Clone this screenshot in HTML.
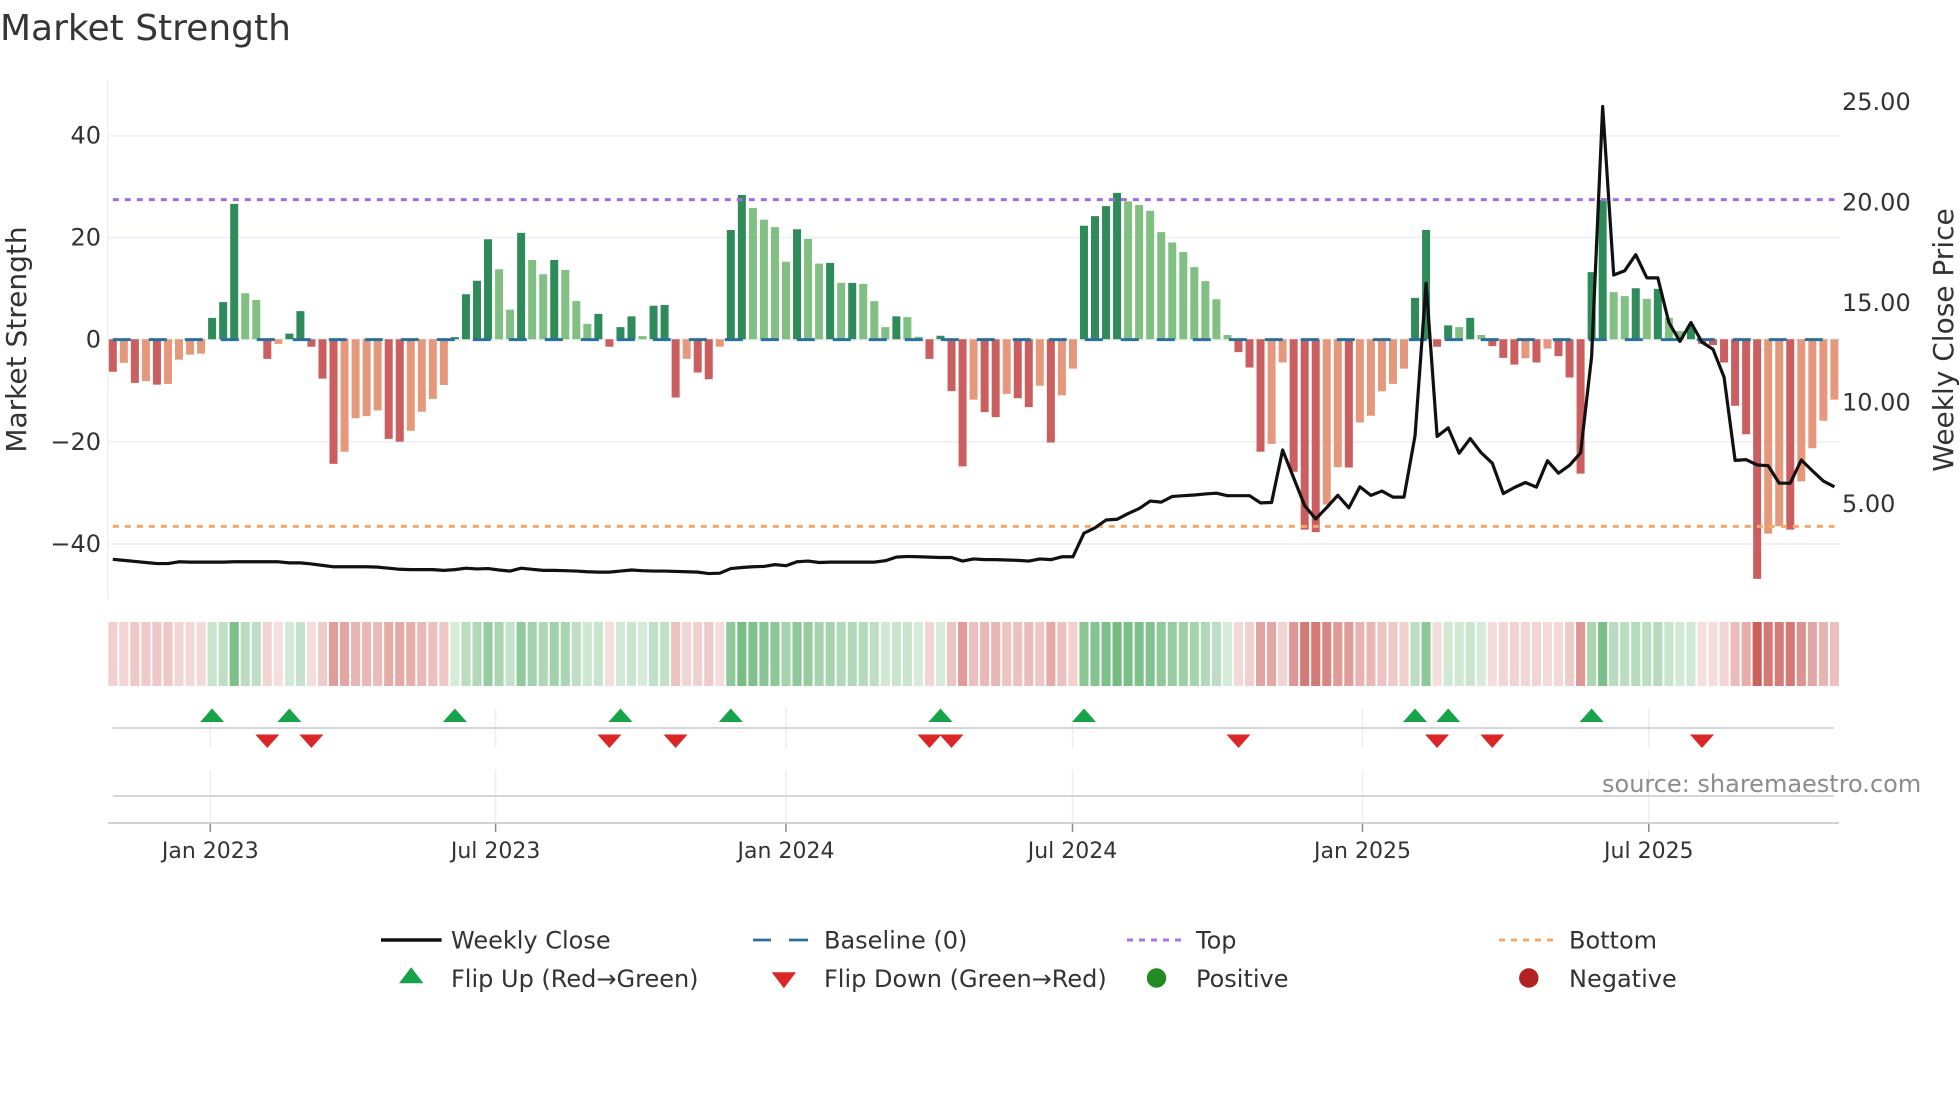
<!DOCTYPE html>
<html lang="en">
<head>
<meta charset="utf-8">
<title>Market Strength</title>
<style>
html,body{margin:0;padding:0;background:#fff;width:1960px;height:1102px;overflow:hidden}
svg{display:block}
text{font-family:"DejaVu Sans","Liberation Sans",sans-serif;fill:#333}
.h rect{width:.825px;height:1px}
.r{fill:rgb(200,85,80)}
.g{fill:rgb(40,150,60)}
</style>
</head>
<body>
<svg width="1960" height="1102" viewBox="0 0 1960 1102" xmlns="http://www.w3.org/2000/svg">
<rect width="1960" height="1102" fill="#fff"/>
<text x="0" y="40" font-size="36" style="fill:#363636">Market Strength</text>

<!-- grid -->
<path d="M107.7 80V599" stroke="#eef1f5" stroke-width="1.5" fill="none"/>
<path d="M108 135.7H1840M108 237.5H1840M108 441.8H1840M108 544H1840" stroke="#eff2f7" stroke-width="2" fill="none"/>
<path d="M108 339.6H1840" stroke="#eef3f0" stroke-width="2.5" fill="none"/>

<!-- bars: x = index, y = source coords -->
<g transform="translate(112.8 60) scale(11.036 .35714)" fill="none" stroke-width=".725">
<path stroke="#2f8b5a" d="M9 782V722M10 782V678M11 782V403M16 782V766M17 782V703M31 782V776M32 782V656M33 782V618M34 782V502M37 782V484M40 782V560M44 782V711M46 782V748M47 782V718M49 782V688M50 782V686M56 782V476M57 782V378M62 782V474M65 782V568M67 782V624M71 782V718M75 782V772M88 782V464M89 782V437M90 782V409M91 782V372M118 782V666M119 782V476M121 782V743M123 782V722M134 782V594M135 782V392M138 782V639M140 782V641M143 782V745"/>
<path stroke="#81bf82" d="M12 782V653M13 782V672M35 782V586M36 782V699M38 782V560M39 782V600M41 782V588M42 782V675M43 782V739M48 782V773M58 782V414M59 782V447M60 782V468M61 782V565M63 782V501M64 782V570M66 782V624M68 782V627M69 782V675M70 782V748M72 782V720M73 782V775M92 782V396M93 782V406M94 782V422M95 782V482M96 782V511M97 782V538M98 782V580M99 782V619M100 782V670M101 782V770M122 782V748M124 782V770M136 782V650M137 782V661M139 782V669M141 782V722M142 782V759"/>
<path stroke="#cb5e5e" d="M0 782V873M2 782V904M4 782V909M14 782V837M18 782V803M19 782V892M20 782V1131M25 782V1061M26 782V1069M45 782V803M51 782V945M53 782V875M54 782V894M74 782V837M76 782V927M77 782V1138M79 782V986M80 782V1000M82 782V947M83 782V972M85 782V1071M102 782V818M103 782V861M104 782V1097M107 782V1153M108 782V1315M109 782V1322M112 782V1141M120 782V803M125 782V801M126 782V834M127 782V853M129 782V847M131 782V829M132 782V889M133 782V1158M144 782V795M145 782V798M146 782V847M147 782V968M148 782V1048M149 782V1453M152 782V1315"/>
<path stroke="#e6987c" d="M1 782V848M3 782V899M5 782V907M6 782V839M7 782V825M8 782V822M15 782V795M21 782V1097M22 782V1003M23 782V997M24 782V981M27 782V1038M28 782V985M29 782V949M30 782V910M52 782V837M55 782V803M78 782V951M81 782V935M84 782V912M86 782V939M87 782V864M105 782V1075M106 782V847M110 782V1245M111 782V1140M113 782V1015M114 782V996M115 782V928M116 782V907M117 782V864M128 782V835M130 782V808M150 782V1326M151 782V1305M153 782V1180M154 782V1087M155 782V1010M156 782V951"/>
</g>

<!-- reference lines -->
<path d="M112.8 339.6H1834.5" stroke="#2a709f" stroke-width="3" stroke-dasharray="18 18" fill="none"/>
<path d="M112.8 199.6H1834.5" stroke="#9b6fdc" stroke-width="3" stroke-dasharray="6 6" fill="none"/>
<path d="M112.8 526.4H1834.5" stroke="#f3a96b" stroke-width="3" stroke-dasharray="6 6" fill="none"/>

<!-- price line -->
<g transform="translate(112.8 60) scale(11.036 .35714)">
<polyline fill="none" stroke="#111" stroke-width="3.2" stroke-linejoin="round" stroke-linecap="butt" vector-effect="non-scaling-stroke" points="0,1398 1,1401 2,1404 3,1407 4,1410 5,1410 6,1405 7,1406 8,1406 9,1406 10,1406 11,1405 12,1405 13,1405 14,1405 15,1405 16,1408 17,1408 18,1411 19,1415 20,1419 21,1419 22,1419 23,1419 24,1420 25,1423 26,1426 27,1427 28,1427 29,1427 30,1429 31,1427 32,1423 33,1425 34,1424 35,1428 36,1431 37,1423 38,1426 39,1429 40,1429 41,1430 42,1431 43,1433 44,1434 45,1434 46,1431 47,1428 48,1430 49,1431 50,1431 51,1432 52,1433 53,1434 54,1438 55,1437 56,1424 57,1421 58,1419 59,1418 60,1413 61,1416 62,1405 63,1403 64,1407 65,1406 66,1406 67,1406 68,1406 69,1406 70,1402 71,1392 72,1390 73,1391 74,1392 75,1393 76,1393 77,1403 78,1397 79,1399 80,1399 81,1400 82,1401 83,1403 84,1397 85,1399 86,1391 87,1391 88,1325 89,1310 90,1288 91,1286 92,1270 93,1256 94,1235 95,1238 96,1222 97,1220 98,1218 99,1215 100,1213 101,1220 102,1220 103,1220 104,1240 105,1239 106,1092 107,1170 108,1248 109,1285 110,1253 111,1219 112,1254 113,1195 114,1219 115,1207 116,1224 117,1224 118,1052 119,625 120,1054 121,1030 122,1101 123,1060 124,1100 125,1129 126,1214 127,1197 128,1183 129,1196 130,1122 131,1157 132,1135 133,1100 134,830 135,130 136,602 137,590 138,545 139,610 140,610 141,735 142,788 143,735 144,790 145,810 146,888 147,1121 148,1119 149,1134 150,1136 151,1185 152,1185 153,1120 154,1150 155,1179 156,1195"/>
</g>

<!-- axis tick labels -->
<g font-size="24" text-anchor="end">
<text x="101" y="143.7">40</text>
<text x="101" y="245.5">20</text>
<text x="101" y="347.5">0</text>
<text x="101" y="449.8">−20</text>
<text x="101" y="552">−40</text>
</g>
<g font-size="24">
<text x="1842" y="109.8">25.00</text>
<text x="1842" y="210.5">20.00</text>
<text x="1842" y="310.8">15.00</text>
<text x="1842" y="410.3">10.00</text>
<text x="1842" y="512">5.00</text>
</g>
<text transform="translate(26 339.5) rotate(-90)" font-size="28" text-anchor="middle">Market Strength</text>
<text transform="translate(1953 340) rotate(-90)" font-size="28" text-anchor="middle">Weekly Close Price</text>

<!-- heat strip -->
<g class="h" transform="translate(108.25 622) scale(11.036 64)">
<g class="r"><rect x="0" opacity=".28"/><rect x="1" opacity=".25"/><rect x="2" opacity=".32"/><rect x="3" opacity=".31"/><rect x="4" opacity=".32"/><rect x="5" opacity=".32"/><rect x="6" opacity=".24"/><rect x="7" opacity=".23"/><rect x="8" opacity=".22"/></g>
<g class="g"><rect x="9" opacity=".25"/><rect x="10" opacity=".3"/><rect x="11" opacity=".6"/><rect x="12" opacity=".32"/><rect x="13" opacity=".3"/></g>
<g class="r"><rect x="14" opacity=".24"/><rect x="15" opacity=".19"/></g>
<g class="g"><rect x="16" opacity=".2"/><rect x="17" opacity=".27"/></g>
<g class="r"><rect x="18" opacity=".2"/><rect x="19" opacity=".3"/><rect x="20" opacity=".57"/><rect x="21" opacity=".53"/><rect x="22" opacity=".43"/><rect x="23" opacity=".42"/><rect x="24" opacity=".4"/><rect x="25" opacity=".49"/><rect x="26" opacity=".5"/><rect x="27" opacity=".47"/><rect x="28" opacity=".41"/><rect x="29" opacity=".37"/><rect x="30" opacity=".32"/></g>
<g class="g"><rect x="31" opacity=".19"/><rect x="32" opacity=".32"/><rect x="33" opacity=".36"/><rect x="34" opacity=".49"/><rect x="35" opacity=".4"/><rect x="36" opacity=".27"/><rect x="37" opacity=".51"/><rect x="38" opacity=".43"/><rect x="39" opacity=".38"/><rect x="40" opacity=".43"/><rect x="41" opacity=".4"/><rect x="42" opacity=".3"/><rect x="43" opacity=".23"/><rect x="44" opacity=".26"/></g>
<g class="r"><rect x="45" opacity=".2"/></g>
<g class="g"><rect x="46" opacity=".22"/><rect x="47" opacity=".25"/><rect x="48" opacity=".19"/><rect x="49" opacity=".29"/><rect x="50" opacity=".29"/></g>
<g class="r"><rect x="51" opacity=".36"/><rect x="52" opacity=".24"/><rect x="53" opacity=".28"/><rect x="54" opacity=".31"/><rect x="55" opacity=".2"/></g>
<g class="g"><rect x="56" opacity=".52"/><rect x="57" opacity=".63"/><rect x="58" opacity=".59"/><rect x="59" opacity=".55"/><rect x="60" opacity=".53"/><rect x="61" opacity=".42"/><rect x="62" opacity=".52"/><rect x="63" opacity=".49"/><rect x="64" opacity=".42"/><rect x="65" opacity=".42"/><rect x="66" opacity=".36"/><rect x="67" opacity=".36"/><rect x="68" opacity=".35"/><rect x="69" opacity=".3"/><rect x="70" opacity=".22"/><rect x="71" opacity=".25"/><rect x="72" opacity=".25"/><rect x="73" opacity=".19"/></g>
<g class="r"><rect x="74" opacity=".24"/></g>
<g class="g"><rect x="75" opacity=".19"/></g>
<g class="r"><rect x="76" opacity=".34"/><rect x="77" opacity=".58"/><rect x="78" opacity=".37"/><rect x="79" opacity=".41"/><rect x="80" opacity=".42"/><rect x="81" opacity=".35"/><rect x="82" opacity=".36"/><rect x="83" opacity=".39"/><rect x="84" opacity=".33"/><rect x="85" opacity=".5"/><rect x="86" opacity=".36"/><rect x="87" opacity=".27"/></g>
<g class="g"><rect x="88" opacity=".54"/><rect x="89" opacity=".57"/><rect x="90" opacity=".6"/><rect x="91" opacity=".64"/><rect x="92" opacity=".61"/><rect x="93" opacity=".6"/><rect x="94" opacity=".58"/><rect x="95" opacity=".52"/><rect x="96" opacity=".48"/><rect x="97" opacity=".45"/><rect x="98" opacity=".41"/><rect x="99" opacity=".36"/><rect x="100" opacity=".31"/><rect x="101" opacity=".19"/></g>
<g class="r"><rect x="102" opacity=".22"/><rect x="103" opacity=".27"/><rect x="104" opacity=".53"/><rect x="105" opacity=".51"/><rect x="106" opacity=".25"/><rect x="107" opacity=".6"/><rect x="108" opacity=".78"/><rect x="109" opacity=".78"/><rect x="110" opacity=".7"/><rect x="111" opacity=".58"/><rect x="112" opacity=".58"/><rect x="113" opacity=".44"/><rect x="114" opacity=".42"/><rect x="115" opacity=".34"/><rect x="116" opacity=".32"/><rect x="117" opacity=".27"/></g>
<g class="g"><rect x="118" opacity=".31"/><rect x="119" opacity=".52"/></g>
<g class="r"><rect x="120" opacity=".2"/></g>
<g class="g"><rect x="121" opacity=".22"/><rect x="122" opacity=".22"/><rect x="123" opacity=".25"/><rect x="124" opacity=".19"/></g>
<g class="r"><rect x="125" opacity=".2"/><rect x="126" opacity=".24"/><rect x="127" opacity=".26"/><rect x="128" opacity=".24"/><rect x="129" opacity=".25"/><rect x="130" opacity=".21"/><rect x="131" opacity=".23"/><rect x="132" opacity=".3"/><rect x="133" opacity=".6"/></g>
<g class="g"><rect x="134" opacity=".39"/><rect x="135" opacity=".61"/><rect x="136" opacity=".33"/><rect x="137" opacity=".32"/><rect x="138" opacity=".34"/><rect x="139" opacity=".31"/><rect x="140" opacity=".34"/><rect x="141" opacity=".25"/><rect x="142" opacity=".21"/><rect x="143" opacity=".22"/></g>
<g class="r"><rect x="144" opacity=".19"/><rect x="145" opacity=".2"/><rect x="146" opacity=".25"/><rect x="147" opacity=".39"/><rect x="148" opacity=".48"/><rect x="149" opacity=".93"/><rect x="150" opacity=".79"/><rect x="151" opacity=".77"/><rect x="152" opacity=".78"/><rect x="153" opacity=".63"/><rect x="154" opacity=".52"/><rect x="155" opacity=".44"/><rect x="156" opacity=".37"/></g>
</g>

<!-- lower panels -->
<path d="M210.3 708V748M495.6 708V748M786 708V748M1072.5 708V748M1362.5 708V748M1648.8 708V748M210.3 770V823M495.6 770V823M786 770V823M1072.5 770V823M1362.5 770V823M1648.8 770V823" stroke="#eceff3" stroke-width="1.5" fill="none"/>
<path d="M112.7 728H1833.8M112.7 796H1833.8" stroke="#d3d6da" stroke-width="2" fill="none"/>
<path d="M108 823H1839" stroke="#d0d3d6" stroke-width="2" fill="none"/>
<path d="M210.3 824V832M495.6 824V832M786 824V832M1072.5 824V832M1362.5 824V832M1648.8 824V832" stroke="#8b8b8b" stroke-width="1.5" fill="none"/>

<!-- flip markers -->
<path fill="#16a34a" d="M200.1 722l12-13.5 12 13.5zM277.4 722l12-13.5 12 13.5zM442.9 722l12-13.5 12 13.5zM608.5 722l12-13.5 12 13.5zM718.8 722l12-13.5 12 13.5zM928.5 722l12-13.5 12 13.5zM1072 722l12-13.5 12 13.5zM1403 722l12-13.5 12 13.5zM1436.2 722l12-13.5 12 13.5zM1579.6 722l12-13.5 12 13.5z"/>
<path fill="#dc2626" d="M255.3 734.5h24l-12 13.5zM299.4 734.5h24l-12 13.5zM597.4 734.5h24l-12 13.5zM663.6 734.5h24l-12 13.5zM917.5 734.5h24l-12 13.5zM939.5 734.5h24l-12 13.5zM1226.5 734.5h24l-12 13.5zM1425.1 734.5h24l-12 13.5zM1480.3 734.5h24l-12 13.5zM1690 734.5h24l-12 13.5z"/>

<!-- x labels -->
<g font-size="22" text-anchor="middle">
<text x="210.3" y="858">Jan 2023</text>
<text x="495.6" y="858">Jul 2023</text>
<text x="786" y="858">Jan 2024</text>
<text x="1072.5" y="858">Jul 2024</text>
<text x="1362.5" y="858">Jan 2025</text>
<text x="1648.8" y="858">Jul 2025</text>
</g>

<text x="1602" y="792" font-size="24" style="fill:#8c8c8c">source: sharemaestro.com</text>

<!-- legend -->
<path d="M381 940H441.6" stroke="#111" stroke-width="3.4" fill="none"/>
<path d="M753 940H771M789 940H808" stroke="#2a709f" stroke-width="2.8" fill="none"/>
<path d="M1127 940H1181" stroke="#a876e0" stroke-width="3" stroke-dasharray="6 6" fill="none"/>
<path d="M1499 940H1553.6" stroke="#f3a96b" stroke-width="3" stroke-dasharray="6 6" fill="none"/>
<path fill="#16a34a" d="M399 983.3L411.2 967.3L423.4 983.3z"/>
<path fill="#dc2626" d="M771.7 972.3h24.4l-12.2 16z"/>
<circle cx="1156.5" cy="978" r="9.7" fill="#228b22"/>
<circle cx="1528.8" cy="978" r="9.7" fill="#b22222"/>
<g font-size="24">
<text x="451" y="948.3">Weekly Close</text>
<text x="824" y="948.3">Baseline (0)</text>
<text x="1196" y="948.3">Top</text>
<text x="1569" y="948.3">Bottom</text>
<text x="451" y="986.8">Flip Up (Red→Green)</text>
<text x="824" y="986.8">Flip Down (Green→Red)</text>
<text x="1196" y="986.8">Positive</text>
<text x="1569" y="986.8">Negative</text>
</g>
</svg>
</body>
</html>
